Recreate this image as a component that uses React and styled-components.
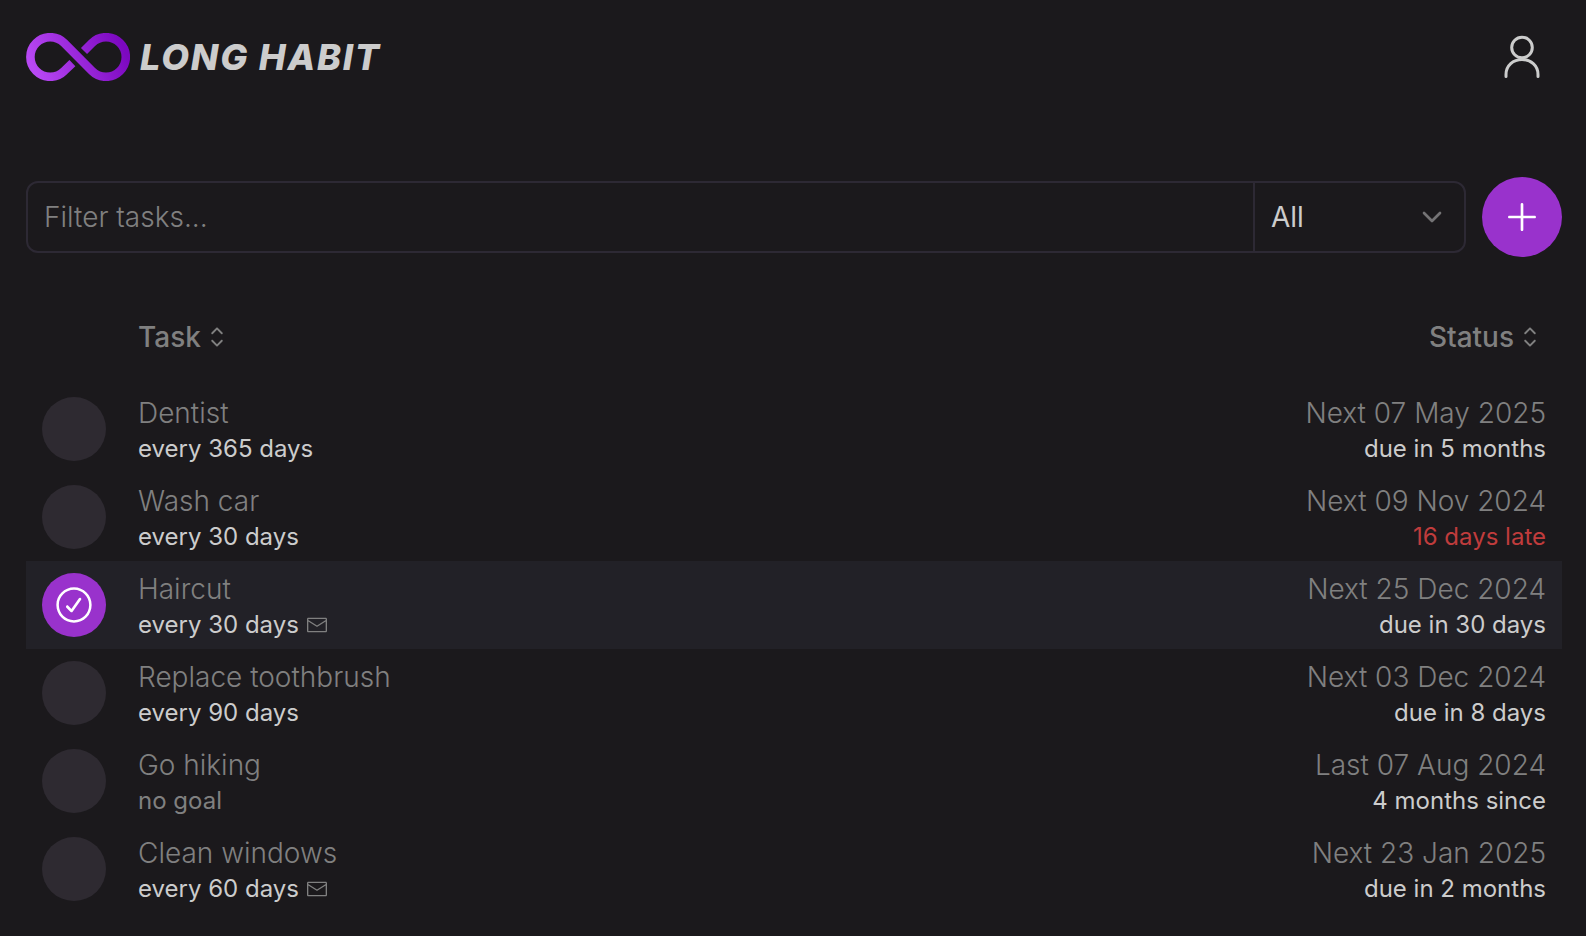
import { useState } from 'react';
import styled, { createGlobalStyle } from 'styled-components';
import { ChevronDown } from 'lucide-react';
import {
  RxCaretSort,
  RxCheckCircled,
  RxEnvelopeClosed,
  RxPlus,
} from 'react-icons/rx';

const GlobalStyle = createGlobalStyle`
  *, *::before, *::after {
    box-sizing: border-box;
  }
  body {
    margin: 0;
    background-color: #1b191c;
    color: #cccccc;
    font-family: Inter, 'Liberation Sans', sans-serif;
    font-size: 28px;
    font-weight: 300;
    font-optical-sizing: none;
    line-height: 40px;
  }
  button, input, select {
    font: inherit;
    letter-spacing: inherit;
    color: inherit;
  }
`;

const StyledPage = styled.div`
  padding: 17px 24px 24px 26px;
`;

const StyledHeader = styled.header`
  display: flex;
  align-items: center;
  justify-content: space-between;
  margin-bottom: 80px;
`;

const StyledBrand = styled.a`
  display: flex;
  align-items: center;
  gap: 10px;
  color: inherit;
  font-size: 36px;
  font-weight: 800;
  font-style: italic;
  letter-spacing: 0.05em;
  text-decoration: none;
`;

const StyledIconButton = styled.button`
  display: flex;
  flex: none;
  align-items: center;
  justify-content: center;
  width: 80px;
  height: 80px;
  padding: 0;
  border: none;
  border-radius: 50%;
  background: ${(props) => (props.$filled ? '#9932cc' : 'transparent')};
  color: ${(props) => (props.$filled ? 'white' : 'inherit')};
  cursor: pointer;
`;

const StyledToolbar = styled.div`
  display: flex;
  align-items: center;
  gap: 16px;
  margin-bottom: 32px;
`;

const StyledFilter = styled.div`
  display: flex;
  flex: 1;
  height: 72px;
  border: 2px solid #2d2934;
  border-radius: 12px;
`;

const StyledFilterInput = styled.input`
  flex: 1;
  min-width: 0;
  padding: 0 16px;
  border: none;
  outline: none;
  background: transparent;
  &::placeholder {
    color: #808080;
    opacity: 1;
  }
`;

const StyledSelectWrapper = styled.div`
  display: grid;
  align-items: center;
  width: 211px;
  border-left: 2px solid #2d2934;
  > * {
    grid-area: 1 / 1;
  }
  svg {
    justify-self: end;
    margin-right: 16px;
    color: #747375;
    pointer-events: none;
  }
`;

const StyledSelect = styled.select`
  width: 100%;
  height: 100%;
  padding: 0 16px;
  border: none;
  outline: none;
  appearance: none;
  background: transparent;
  font-weight: 400;
`;

const StyledTable = styled.table`
  width: 100%;
  border-collapse: collapse;
`;

const StyledHeaderCell = styled.th`
  width: ${(props) => props.$width || 'auto'};
  height: 96px;
  padding: 0 16px 2px;
  text-align: ${(props) => props.$align || 'left'};
`;

const StyledSortButton = styled.button`
  display: inline-flex;
  align-items: center;
  padding: 0;
  border: none;
  background: transparent;
  color: #808080;
  font-weight: 500;
  vertical-align: middle;
  cursor: pointer;
`;

const StyledRow = styled.tr`
  background-color: ${(props) => (props.$active ? '#222127' : 'transparent')};
`;

const StyledCell = styled.td`
  height: 88px;
  padding: 8px 16px;
  text-align: ${(props) => props.$align || 'left'};
`;

const StyledDoneButton = styled.button`
  display: flex;
  align-items: center;
  justify-content: center;
  width: 64px;
  height: 64px;
  padding: 0;
  border: none;
  border-radius: 50%;
  background-color: ${(props) => (props.$active ? '#9932cc' : '#2e2a31')};
  color: white;
  cursor: pointer;
`;

const StyledPrimary = styled.div`
  color: #808080;
`;

const toneColors = {
  normal: '#cccccc',
  muted: '#808080',
  late: '#c03c3c',
};

const StyledSecondary = styled.div`
  display: flex;
  align-items: center;
  justify-content: ${(props) => props.$justify || 'flex-start'};
  gap: 8px;
  color: ${(props) => toneColors[props.$tone || 'normal']};
  font-size: 24px;
  font-weight: 400;
  line-height: 32px;
  svg {
    color: #808080;
  }
`;

const Logo = () => (
  <svg width="104" height="48" viewBox="0 0 104 48" fill="none" aria-hidden="true">
    <defs>
      <linearGradient
        id="logo-gradient"
        gradientUnits="userSpaceOnUse"
        x1="10"
        y1="42"
        x2="94"
        y2="6"
      >
        <stop offset="0" stopColor="#b848f4" />
        <stop offset="1" stopColor="#7c08c0" />
      </linearGradient>
    </defs>
    <path
      d="M46.4 30.2L38.2 38A19.8 19.8 0 1 1 38.2 10L66 38A19.8 19.8 0 1 0 66 10L58 18"
      stroke="url(#logo-gradient)"
      strokeWidth="8.6"
    />
  </svg>
);

const UserIcon = () => (
  <svg
    width="48"
    height="48"
    viewBox="0 0 48 48"
    fill="none"
    stroke="currentColor"
    strokeWidth="3"
    strokeLinecap="round"
    aria-hidden="true"
  >
    <circle cx="24" cy="14.5" r="10.3" />
    <path d="M8 43.5V41.5C8 32.5 15.2 26.5 24 26.5S40 32.5 40 41.5V43.5" />
  </svg>
);

const tasks = [
  { name: 'Dentist', repeat: 'every 365 days', date: 'Next 07 May 2025', due: 'due in 5 months' },
  { name: 'Wash car', repeat: 'every 30 days', date: 'Next 09 Nov 2024', due: '16 days late', late: true },
  { name: 'Haircut', repeat: 'every 30 days', date: 'Next 25 Dec 2024', due: 'due in 30 days', reminder: true },
  { name: 'Replace toothbrush', repeat: 'every 90 days', date: 'Next 03 Dec 2024', due: 'due in 8 days' },
  { name: 'Go hiking', repeat: null, date: 'Last 07 Aug 2024', due: '4 months since' },
  { name: 'Clean windows', repeat: 'every 60 days', date: 'Next 23 Jan 2025', due: 'due in 2 months', reminder: true },
];

const TaskRow = ({ task, active, onSelect }) => (
  <StyledRow $active={active}>
    <StyledCell>
      <StyledDoneButton
        type="button"
        $active={active}
        aria-label={`Complete ${task.name}`}
        onClick={onSelect}
      >
        {active && <RxCheckCircled size={40} />}
      </StyledDoneButton>
    </StyledCell>
    <StyledCell>
      <StyledPrimary>{task.name}</StyledPrimary>
      <StyledSecondary $tone={task.repeat ? 'normal' : 'muted'}>
        {task.repeat || 'no goal'}
        {task.reminder && <RxEnvelopeClosed size={20} />}
      </StyledSecondary>
    </StyledCell>
    <StyledCell $align="right">
      <StyledPrimary>{task.date}</StyledPrimary>
      <StyledSecondary $justify="flex-end" $tone={task.late ? 'late' : 'normal'}>
        {task.due}
      </StyledSecondary>
    </StyledCell>
  </StyledRow>
);

const App = () => {
  const [filter, setFilter] = useState('');
  const [activeTask, setActiveTask] = useState('Haircut');

  const visibleTasks = tasks.filter((task) =>
    task.name.toLowerCase().includes(filter.toLowerCase())
  );

  return (
    <>
      <GlobalStyle />
      <StyledPage>
        <StyledHeader>
          <StyledBrand href="#">
            <Logo />
            LONG HABIT
          </StyledBrand>
          <StyledIconButton type="button" aria-label="Account">
            <UserIcon />
          </StyledIconButton>
        </StyledHeader>
        <main>
          <StyledToolbar>
            <StyledFilter>
              <StyledFilterInput
                type="text"
                aria-label="Filter tasks"
                placeholder="Filter tasks..."
                value={filter}
                onChange={(e) => setFilter(e.target.value)}
              />
              <StyledSelectWrapper>
                <StyledSelect aria-label="Status filter">
                  <option>All</option>
                  <option>Due</option>
                  <option>Late</option>
                </StyledSelect>
                <ChevronDown size={32} />
              </StyledSelectWrapper>
            </StyledFilter>
            <StyledIconButton type="button" $filled aria-label="Add task">
              <RxPlus size={40} />
            </StyledIconButton>
          </StyledToolbar>
          <StyledTable>
            <thead>
              <tr>
                <StyledHeaderCell $width="96px" aria-label="Done" />
                <StyledHeaderCell>
                  <StyledSortButton type="button">
                    Task
                    <RxCaretSort size={32} />
                  </StyledSortButton>
                </StyledHeaderCell>
                <StyledHeaderCell $align="right">
                  <StyledSortButton type="button">
                    Status
                    <RxCaretSort size={32} />
                  </StyledSortButton>
                </StyledHeaderCell>
              </tr>
            </thead>
            <tbody>
              {visibleTasks.map((task) => (
                <TaskRow
                  key={task.name}
                  task={task}
                  active={task.name === activeTask}
                  onSelect={() => setActiveTask(task.name)}
                />
              ))}
            </tbody>
          </StyledTable>
        </main>
      </StyledPage>
    </>
  );
};

export default App;
